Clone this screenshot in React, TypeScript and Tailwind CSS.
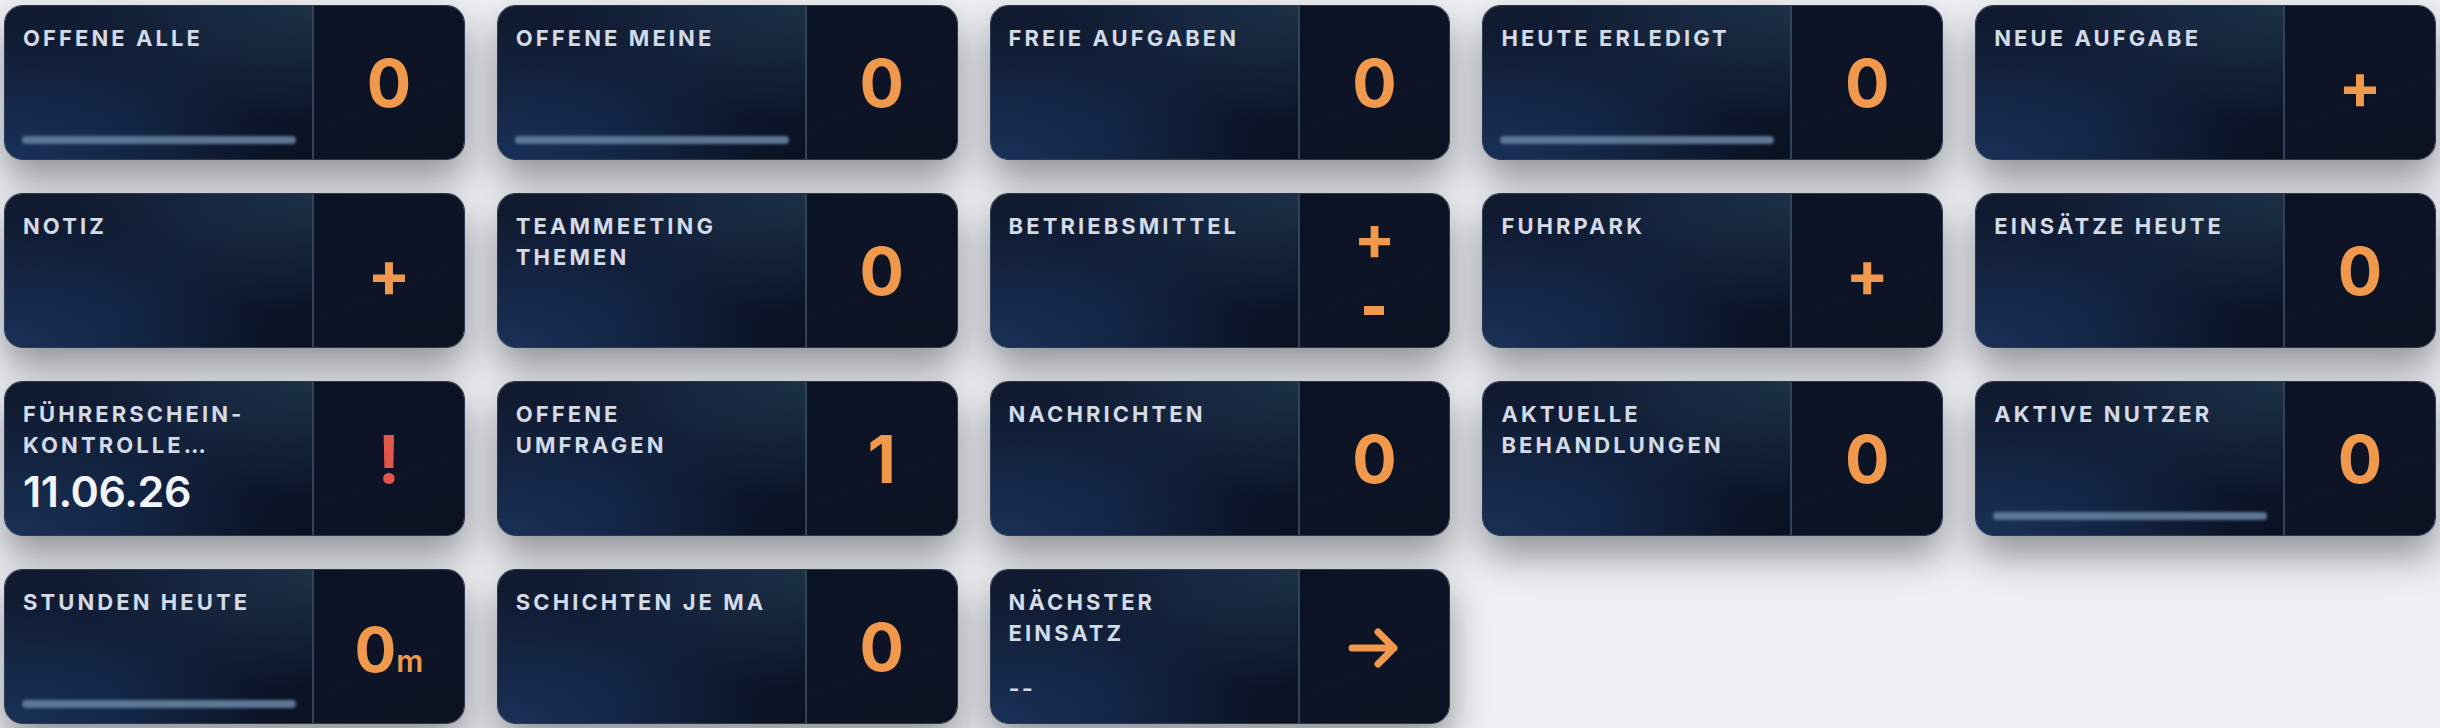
import React from "react";

type Tile = {
  title: string[];
  value?: string;
  kind?: "num" | "plus" | "plusminus" | "alert" | "arrow" | "minutes";
  bar?: boolean;
  sub?: string;
  subLarge?: boolean;
};

const tiles: Tile[] = [
  { title: ["OFFENE ALLE"], value: "0", bar: true },
  { title: ["OFFENE MEINE"], value: "0", bar: true },
  { title: ["FREIE AUFGABEN"], value: "0" },
  { title: ["HEUTE ERLEDIGT"], value: "0", bar: true },
  { title: ["NEUE AUFGABE"], kind: "plus" },
  { title: ["NOTIZ"], kind: "plus" },
  { title: ["TEAMMEETING", "THEMEN"], value: "0" },
  { title: ["BETRIEBSMITTEL"], kind: "plusminus" },
  { title: ["FUHRPARK"], kind: "plus" },
  { title: ["EINSÄTZE HEUTE"], value: "0" },
  { title: ["FÜHRERSCHEIN-", "KONTROLLE…"], kind: "alert", sub: "11.06.26", subLarge: true },
  { title: ["OFFENE", "UMFRAGEN"], value: "1" },
  { title: ["NACHRICHTEN"], value: "0" },
  { title: ["AKTUELLE", "BEHANDLUNGEN"], value: "0" },
  { title: ["AKTIVE NUTZER"], value: "0", bar: true },
  { title: ["STUNDEN HEUTE"], kind: "minutes", bar: true },
  { title: ["SCHICHTEN JE MA"], value: "0" },
  { title: ["NÄCHSTER", "EINSATZ"], kind: "arrow", sub: "--" },
];

const font = { fontFamily: "Inter, 'Noto Sans', sans-serif" };

function Action({ t }: { t: Tile }) {
  const kind = t.kind ?? "num";
  if (kind === "plus") {
    return <span className="mt-[6px] text-[64px] font-bold leading-none text-[#f0984b]">+</span>;
  }
  if (kind === "plusminus") {
    // add / remove pair: plus glyph on top, minus drawn as a short bar
    return (
      <div className="flex flex-col items-center pb-[20px]">
        <span className="text-[62px] font-bold leading-none text-[#f0984b]">+</span>
        <div aria-label="-" className="mt-[37px] h-[9px] w-[20px] bg-[#f0984b]" />
      </div>
    );
  }
  if (kind === "alert") {
    return <span className="text-[66px] font-bold leading-none text-[#e2554b]">!</span>;
  }
  if (kind === "arrow") {
    return (
      <svg width="52" height="44" viewBox="0 0 52 44" fill="none" className="mt-[2px]">
        <path
          d="M4 22H46M30 6L46 22L30 38"
          stroke="#f0984b"
          strokeWidth="7"
          strokeLinecap="round"
          strokeLinejoin="round"
        />
      </svg>
    );
  }
  if (kind === "minutes") {
    return (
      <span className="mt-[6px] flex items-baseline font-bold leading-none text-[#f0984b]">
        <span className="text-[62px]">0</span>
        <span className="text-[30px] font-semibold">m</span>
      </span>
    );
  }
  return <span className="text-[66px] font-bold leading-none text-[#f0984b]">{t.value}</span>;
}

function Card({ t }: { t: Tile }) {
  return (
    <div className="flex h-[155px] overflow-hidden rounded-[18px] border border-[#2b3a52] shadow-[0_20px_38px_rgba(16,20,32,0.42)]">
      <div className="flex w-[307px] flex-col bg-[radial-gradient(ellipse_at_0%_100%,rgba(28,56,98,0.75),transparent_60%),radial-gradient(ellipse_at_100%_0%,rgba(30,52,74,0.85),transparent_55%),linear-gradient(135deg,#111a2f_0%,#0f1c36_50%,#0a1121_100%)] px-[18px] pt-[17px]">
        <div className="text-[22px] font-bold leading-[31px] tracking-[0.14em] text-[#d3dae5]">
          {t.title.map((line) => (
            <div key={line}>{line}</div>
          ))}
        </div>
        {t.sub && (
          <div
            className={
              t.subLarge
                ? "mt-auto mb-[22px] text-[43px] font-semibold leading-none tracking-[-0.01em] text-[#f1f4f9]"
                : "mt-auto mb-[22px] text-[24px] font-semibold leading-none tracking-[0.08em] text-[#d3dae5]"
            }
          >
            {t.sub}
          </div>
        )}
        {t.bar && (
          <div className="mt-auto mb-[15px] ml-[-1px] mr-[-2px] h-[8px] rounded-full bg-[#5d7896] blur-[1.5px]" />
        )}
      </div>
      <div className="w-[2px] bg-[#33435b]" />
      <div className="flex flex-1 items-center justify-center bg-[linear-gradient(160deg,#0a1324,#0d1426_60%,#0b1322)]">
        <Action t={t} />
      </div>
    </div>
  );
}

export default function App() {
  return (
    <div className="min-h-screen w-full bg-[#eef0f3]" style={font}>
      <div className="grid grid-cols-5 gap-x-[32px] gap-y-[33px] px-[4px] pt-[5px]">
        {tiles.map((t) => (
          <Card key={t.title.join(" ")} t={t} />
        ))}
      </div>
    </div>
  );
}
